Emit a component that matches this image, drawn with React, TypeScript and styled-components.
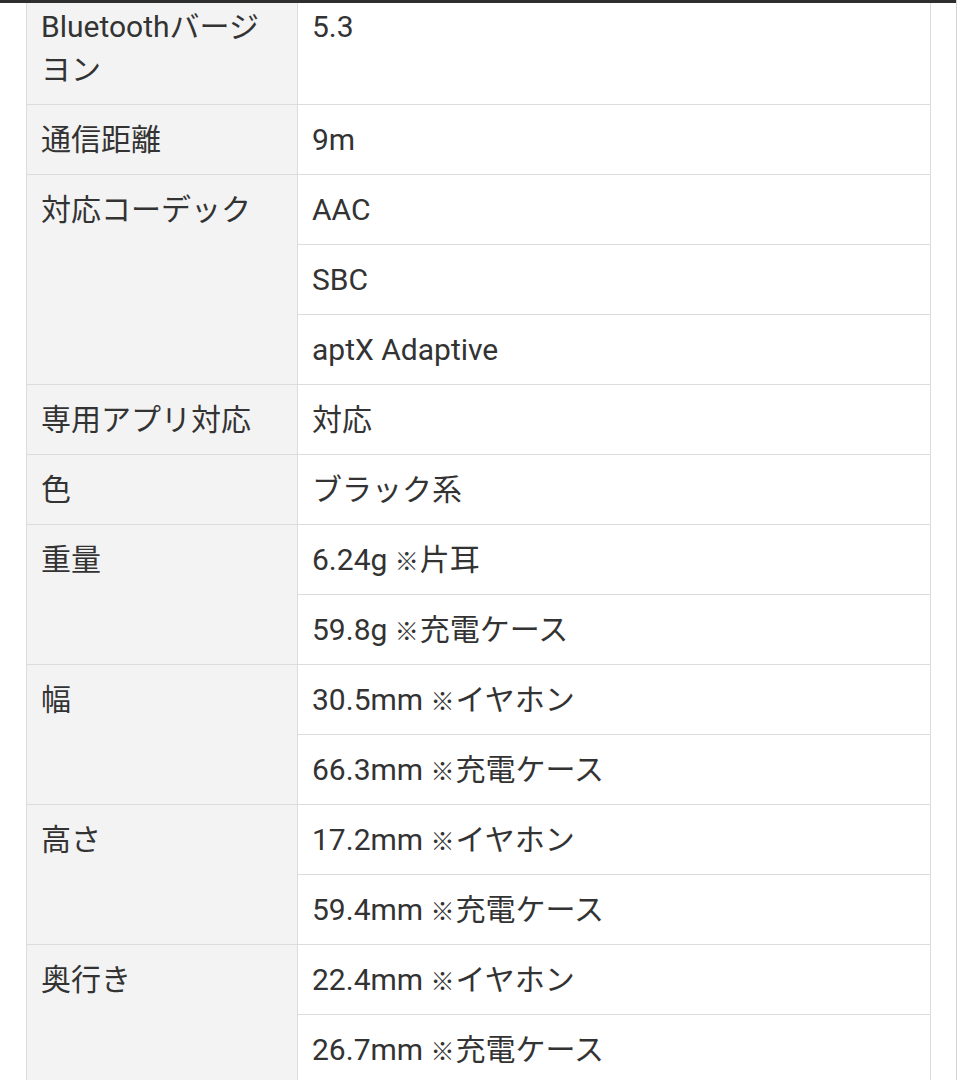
import React from "react";
import styled, { createGlobalStyle } from "styled-components";

const Global = createGlobalStyle`
  html, body { margin: 0; padding: 0; background: #ffffff; }
  body { font-family: Roboto, "Noto Sans CJK JP", sans-serif; }
`;

const Page = styled.div`
  height: 100vh;
  overflow: hidden;
  display: flex;
  flex-direction: column;
  border-right: 1px solid #d4d4d4;
  box-sizing: border-box;
`;

const TopBar = styled.div`
  height: 3px;
  flex-shrink: 0;
  background: #2e2e2e;
  position: relative;
  z-index: 1;
`;

const Content = styled.div`
  padding: 0 25px 0 26px;
  overflow: hidden;
`;

const Table = styled.table`
  width: 100%;
  margin-top: -12px;
  border-collapse: collapse;
  table-layout: fixed;
  color: #333333;
  font-size: 30px;
  line-height: 43px;
`;

const HeadCell = styled.th`
  width: 242px;
  background: #f3f3f3;
  border: 1px solid #dcdcdc;
  padding: 13px 14px;
  text-align: left;
  font-weight: 400;
  vertical-align: top;
`;

const DataCell = styled.td`
  background: #ffffff;
  border: 1px solid #dcdcdc;
  padding: 13px 14px;
  text-align: left;
  vertical-align: top;
`;

const Mark = styled.span`
  font-size: 24px;
  line-height: 0;
  margin-right: 1px;
`;

type Spec = { label: string; values: string[] };

const specs: Spec[] = [
  { label: "Bluetoothバージヨン", values: ["5.3"] },
  { label: "通信距離", values: ["9m"] },
  { label: "対応コーデック", values: ["AAC", "SBC", "aptX Adaptive"] },
  { label: "専用アプリ対応", values: ["対応"] },
  { label: "色", values: ["ブラック系"] },
  { label: "重量", values: ["6.24g ※片耳", "59.8g ※充電ケース"] },
  { label: "幅", values: ["30.5mm ※イヤホン", "66.3mm ※充電ケース"] },
  { label: "高さ", values: ["17.2mm ※イヤホン", "59.4mm ※充電ケース"] },
  { label: "奥行き", values: ["22.4mm ※イヤホン", "26.7mm ※充電ケース"] },
];

function Value({ text }: { text: string }) {
  const idx = text.indexOf("※");
  if (idx < 0) return <>{text}</>;
  return (
    <>
      {text.slice(0, idx)}
      <Mark>※</Mark>
      {text.slice(idx + 1)}
    </>
  );
}

export default function App() {
  return (
    <>
      <Global />
      <Page>
        <TopBar />
        <Content>
          <Table>
            <tbody>
              {specs.map((s) =>
                s.values.map((v, i) => (
                  <tr key={s.label + i}>
                    {i === 0 && (
                      <HeadCell rowSpan={s.values.length}>{s.label}</HeadCell>
                    )}
                    <DataCell>
                      <Value text={v} />
                    </DataCell>
                  </tr>
                ))
              )}
            </tbody>
          </Table>
        </Content>
      </Page>
    </>
  );
}
